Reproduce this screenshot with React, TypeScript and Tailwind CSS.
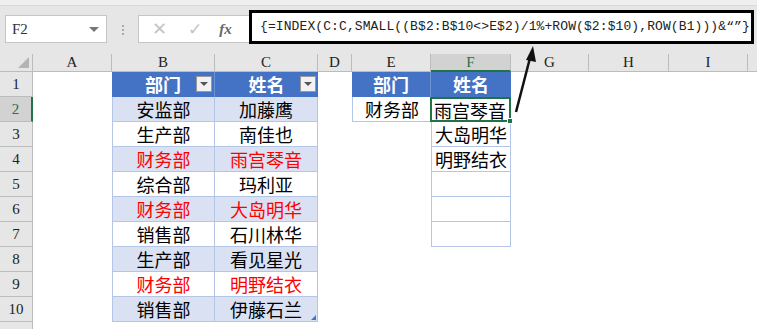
import React from "react";

const LETTERS = ["", "A", "B", "C", "D", "E", "F", "G", "H", "I", ""];

const tableRows: [string, string, boolean][] = [
  ["安监部", "加藤鹰", false],
  ["生产部", "南佳也", false],
  ["财务部", "雨宫琴音", true],
  ["综合部", "玛利亚", false],
  ["财务部", "大岛明华", true],
  ["销售部", "石川林华", false],
  ["生产部", "看见星光", false],
  ["财务部", "明野结衣", true],
  ["销售部", "伊藤石兰", false],
];
const fVals = ["雨宫琴音", "大岛明华", "明野结衣", "", "", ""];

const CJK = "font-['Noto_Sans_CJK_SC','Noto_Sans',sans-serif]";
const SERIF = "font-['Liberation_Serif','DejaVu_Serif',serif]";

function Dropdown() {
  return (
    <div className="absolute right-[2px] top-[4px] w-[16px] h-[16px] bg-[#f2f2f2] border border-[#9a9a9a] flex items-center justify-center">
      <div className="w-0 h-0 border-l-[4px] border-r-[4px] border-t-[4px] border-l-transparent border-r-transparent border-t-[#555]" />
    </div>
  );
}

export default function App() {
  const rowIdx = Array.from({ length: 11 }, (_, i) => i + 1);
  return (
    <div className="w-[757px] h-[329px] overflow-hidden bg-white relative">
      {/* toolbar */}
      <div className="h-[54px] bg-[#e6e6e6]">
        <div className="h-[6px] bg-[#efefef] border-b border-[#dadada]" />
        <div className="flex items-start">
          <div className="ml-[5px] mt-[9px] w-[102px] h-[28px] bg-white border border-[#c6c6c6] flex items-center justify-between pl-[6px] pr-[7px]">
            <span className={"text-[15px] text-[#333] " + SERIF}>F2</span>
            <div className="w-0 h-0 border-l-[5px] border-r-[5px] border-t-[5px] border-l-transparent border-r-transparent border-t-[#777]" />
          </div>
          <div className="ml-[15px] mt-[19px] flex flex-col gap-[2px]">
            <div className="w-[2px] h-[2px] bg-[#aaa]" />
            <div className="w-[2px] h-[2px] bg-[#aaa]" />
            <div className="w-[2px] h-[2px] bg-[#aaa]" />
          </div>
          <div className="ml-[14px] mt-[9px] w-[111px] h-[28px] bg-white border border-[#c6c6c6] border-r-0 flex items-center">
            <span className="ml-[13px] text-[#c4c4c4] text-[18px] leading-none font-['DejaVu_Sans',sans-serif]">✕</span>
            <span className="ml-[21px] text-[#c4c4c4] text-[17px] leading-none font-['DejaVu_Sans',sans-serif]">✓</span>
            <span className={"ml-[17px] text-[#666] text-[15px] italic font-bold leading-none " + SERIF}>fx</span>
          </div>
          <div className="mt-[4px] w-[505px] h-[34px] bg-white border-[3px] border-black flex items-center pl-[8px]">
            <span className="text-[13px] text-[#222] whitespace-nowrap tracking-[0.1px] font-['Liberation_Mono',monospace]">
              {"{=INDEX(C:C,SMALL((B$2:B$10<>E$2)/1%+ROW($2:$10),ROW(B1)))&“”}"}
            </span>
          </div>
        </div>
      </div>

      {/* sheet */}
      <div className="grid grid-cols-[33px_79px_103px_103px_34px_79px_80px_78px_80px_79px_30px] grid-rows-[18px_repeat(11,25px)]">
        {/* column header row */}
        {LETTERS.map((l, i) =>
          i === 0 ? (
            <div key={"h" + i} className="bg-[#e6e6e6] border-r border-b border-[#bcbcbc] relative">
              <div className="absolute right-[3px] bottom-[3px] w-0 h-0 border-r-[11px] border-t-[11px] border-r-[#b4b4b4] border-t-transparent" />
            </div>
          ) : i === 6 ? (
            <div key={"h" + i} className={"bg-[#d2d2d2] border-r border-[#bcbcbc] border-b-2 border-b-[#217346] flex items-center justify-center text-[15px] text-[#217346] " + SERIF}>
              {l}
            </div>
          ) : (
            <div key={"h" + i} className={"bg-[#e6e6e6] border-r border-b border-[#bcbcbc] flex items-center justify-center text-[15px] text-[#222] " + SERIF}>
              {l}
            </div>
          )
        )}

        {rowIdx.map((r) => (
          <React.Fragment key={"r" + r}>
            {r === 2 ? (
              <div className={"bg-[#d2d2d2] border-b border-[#bcbcbc] border-r-2 border-r-[#217346] flex items-end justify-center pb-[1px] text-[15px] text-[#217346] " + SERIF}>
                {r}
              </div>
            ) : (
              <div className={"bg-[#e6e6e6] border-b border-r border-[#bcbcbc] flex items-end justify-center pb-[1px] text-[15px] text-[#222] " + SERIF}>
                {r <= 10 ? r : ""}
              </div>
            )}
            {/* A */}
            <div />
            {/* B and C */}
            {r === 1 ? (
              <>
                <div className={"bg-[#4472c4] text-white font-bold text-[18px] flex items-center justify-center relative border-r border-[#6f92d0] " + CJK}>
                  部门
                  <Dropdown />
                </div>
                <div className={"bg-[#4472c4] text-white font-bold text-[18px] flex items-center justify-center relative " + CJK}>
                  姓名
                  <Dropdown />
                </div>
              </>
            ) : r <= 10 ? (
              <>
                <div
                  className={
                    (r % 2 === 0 ? "bg-[#d9e1f2] " : "bg-white ") +
                    (tableRows[r - 2][2] ? "text-[#ff0000] " : "text-black ") +
                    "border-l border-r border-b border-[#b4c6e7] text-[18px] flex items-center justify-center leading-none " +
                    CJK
                  }
                >
                  {tableRows[r - 2][0]}
                </div>
                <div
                  className={
                    (r % 2 === 0 ? "bg-[#d9e1f2] " : "bg-white ") +
                    (tableRows[r - 2][2] ? "text-[#ff0000] " : "text-black ") +
                    "border-r border-b border-[#b4c6e7] text-[18px] flex items-center justify-center leading-none relative " +
                    CJK
                  }
                >
                  {tableRows[r - 2][1]}
                  {r === 10 && <div className="absolute right-[1px] bottom-[1px] w-0 h-0 border-r-[5px] border-t-[5px] border-r-[#4472c4] border-t-transparent" />}
                </div>
              </>
            ) : (
              <>
                <div />
                <div />
              </>
            )}
            {/* D */}
            <div />
            {/* E */}
            {r === 1 ? (
              <div className={"bg-[#4472c4] text-white font-bold text-[18px] flex items-center justify-center border-r border-[#6f92d0] " + CJK}>
                部门
              </div>
            ) : r === 2 ? (
              <div className={"border-l border-b border-[#b4c6e7] text-[18px] flex items-center justify-center leading-none text-black " + CJK}>
                财务部
              </div>
            ) : (
              <div />
            )}
            {/* F */}
            {r === 1 ? (
              <div className={"bg-[#4472c4] text-white font-bold text-[18px] flex items-center justify-center " + CJK}>
                姓名
              </div>
            ) : r === 2 ? (
              <div className={"relative border-2 border-[#217346] -ml-[1px] text-[18px] flex items-center pl-[2px] leading-none text-black " + CJK}>
                雨宫琴音
                <div className="absolute -right-[4px] -bottom-[4px] w-[6px] h-[6px] bg-[#217346] border border-white" />
              </div>
            ) : r <= 7 ? (
              <div className={"border-l border-r border-b border-[#b4c6e7] text-[18px] flex items-center pl-[3px] leading-none text-black " + CJK}>
                {fVals[r - 2]}
              </div>
            ) : (
              <div />
            )}
            <div />
            <div />
            <div />
            <div />
          </React.Fragment>
        ))}
      </div>

      {/* annotation arrow */}
      <svg className="absolute left-0 top-0 pointer-events-none" width="757" height="329">
        <line x1="516" y1="112" x2="530" y2="58" stroke="#111" strokeWidth="2.5" />
        <polygon points="533,46 526,60 536,62" fill="#111" />
      </svg>
    </div>
  );
}
